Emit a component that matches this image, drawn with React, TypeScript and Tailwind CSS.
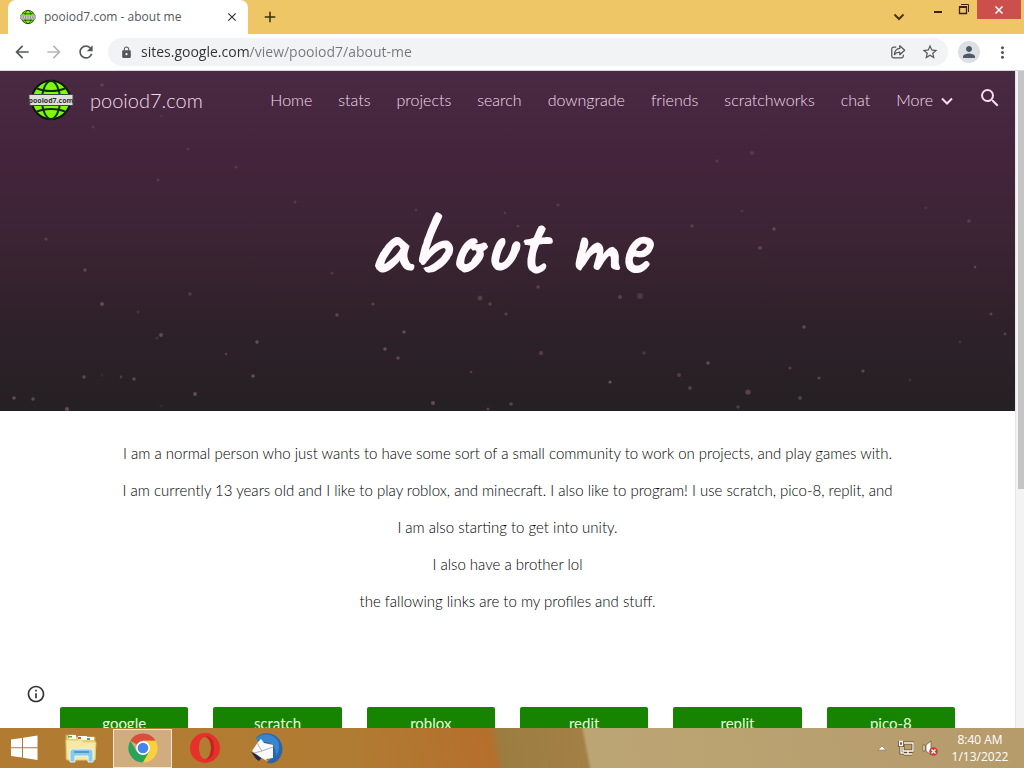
import React from "react";
import {
  MdArrowBack,
  MdArrowForward,
  MdRefresh,
  MdLock,
  MdStarBorder,
  MdMoreVert,
  MdPerson,
  MdSearch,
  MdInfoOutline,
  MdClose,
  MdAdd,
} from "react-icons/md";

const navItems = ["Home", "stats", "projects", "search", "downgrade", "friends", "scratchworks", "chat"];

const paragraphs = [
  "I am a normal person who just wants to have some sort of a small community to work on projects, and play games with.",
  "I am currently 13 years old and I like to play roblox, and minecraft. I also like to program! I use scratch, pico-8, replit, and",
  "I am also starting to get into unity.",
  "I also have a brother lol",
  "the fallowing links are to my profiles and stuff.",
];

const links = ["google", "scratch", "roblox", "redit", "replit", "pico-8"];

// x, y, radius, opacity
const stars: [number, number, number, number][] = [
  [102, 14, 1.6, 0.2], [138, 241, 1.5, 0.2], [161, 45, 1.3, 0.15], [157, 267, 1.5, 0.2],
  [102, 14, 2, 0.1], [102, 304, 1.8, 0.1], [102, 14, 1, 0.1], [161, 335, 1.6, 0.1],
  [84, 306, 1.7, 0.45], [121, 306, 1.4, 0.3], [134, 308, 1.7, 0.45], [14, 327, 1.8, 0.5],
  [102, 233, 2, 0.45], [161, 264, 2, 0.45], [67, 338, 2, 0.5], [190, 223, 1.7, 0.3],
  [33, 328, 1.7, 0.45], [257, 271, 1.8, 0.5], [226, 283, 1.3, 0.35], [253, 305, 1.8, 0.5],
  [195, 323, 1.9, 0.5], [337, 244, 1.8, 0.4], [373, 233, 1.6, 0.35], [404, 261, 1.8, 0.45],
  [385, 278, 1.8, 0.5], [398, 287, 1.7, 0.45], [433, 332, 2, 0.5], [471, 301, 1.3, 0.35],
  [480, 227, 2.5, 0.3], [490, 233, 1.7, 0.35], [506, 243, 1.6, 0.35], [488, 338, 1.6, 0.35],
  [511, 333, 1.8, 0.4], [538, 216, 1.8, 0.35], [620, 226, 2, 0.35], [640, 225, 3, 0.25],
  [541, 282, 2.3, 0.3], [644, 282, 1.8, 0.25], [610, 311, 1.6, 0.55], [679, 304, 2, 0.35],
  [690, 317, 1.9, 0.35], [708, 292, 1.8, 0.45], [748, 321, 2.6, 0.4], [738, 336, 1.8, 0.35],
  [800, 327, 2, 0.35], [790, 297, 1.6, 0.35], [819, 307, 1.6, 0.4], [863, 300, 1.6, 0.45],
  [804, 256, 1.8, 0.45], [991, 243, 1.5, 0.4], [1005, 263, 1.4, 0.35], [960, 271, 1.3, 0.25],
  [774, 158, 1.8, 0.4], [760, 177, 2, 0.35], [742, 140, 1.6, 0.2], [692, 155, 1.8, 0.3],
  [558, 134, 1.6, 0.25], [518, 155, 1.5, 0.3], [717, 90, 1.6, 0.25], [752, 82, 2, 0.25],
  [969, 150, 1.8, 0.3], [975, 196, 1.3, 0.4], [926, 137, 1.3, 0.2], [85, 199, 1.7, 0.4],
  [46, 168, 1.6, 0.3], [158, 109, 1.6, 0.25], [236, 96, 1.5, 0.25], [93, 56, 1.5, 0.2],
  [188, 78, 1.6, 0.2], [295, 131, 1.6, 0.25], [332, 202, 1.6, 0.25], [416, 139, 1.5, 0.2],
  [505, 142, 1.4, 0.25], [910, 309, 1.5, 0.2],
];

function Globe({ className, label = true }: { className?: string; label?: boolean }) {
  return (
    <svg viewBox="0 0 46 42" className={className} aria-hidden="true">
      <circle cx="23" cy="21" r="19.2" fill="#7dfb08" stroke="#111" strokeWidth="2" />
      <g fill="none" stroke="#152d08" strokeWidth="2">
        <ellipse cx="23" cy="21" rx="9" ry="19" />
        <path d="M8 9c8 4 22 4 30 0M8 33c8-4 22-4 30 0M4 21h38" />
      </g>
      <rect x="1" y="15.500" width="44" height="11" fill="#dfdfdc" stroke="#444" strokeWidth="1" />
      {label ? (
        <text x="23" y="23.500" textAnchor="middle" fontFamily="Open Sans, sans-serif" fontSize="7" fontWeight="700" fill="#333">
          pooiod7.com
        </text>
      ) : (
        <path d="M4 21h38" stroke="#777" strokeWidth="4" strokeDasharray="3 2" />
      )}
    </svg>
  );
}

function BrowserTabs() {
  return (
    <header className="flex h-[34px] shrink-0 bg-[#eec665] pl-2">
      <div className="flex w-60 items-center rounded-t-lg bg-white pl-3 pr-2">
        <Globe className="h-4 w-4 shrink-0" label={false} />
        <span className="ml-2 grow truncate text-xs text-[#55585c]">pooiod7.com - about me</span>
        <button aria-label="Close tab" className="flex h-4 w-4 items-center justify-center text-[#333]">
          <MdClose size={14} />
        </button>
      </div>
      <button aria-label="New tab" className="ml-3 flex w-5 items-center justify-center text-[#3b2d12]">
        <MdAdd size={18} />
      </button>
      <div className="grow" />
      <button aria-label="Search tabs" className="mr-4 flex w-5 items-center justify-center text-[#4a3510]">
        <svg viewBox="0 0 12 12" className="h-3 w-3" fill="none" stroke="currentColor" strokeWidth="2">
          <path d="M1.500 3.500 6 8l4.500-4.500" />
        </svg>
      </button>
      <button aria-label="Minimize" className="flex h-5 w-[26px] items-center justify-center text-[#40210c]">
        <svg viewBox="0 0 10 10" className="h-2.5 w-2.5"><path d="M1 6h8v2H1z" fill="currentColor" /></svg>
      </button>
      <button aria-label="Restore" className="flex h-[18px] w-[26px] items-center justify-center text-[#40210c]">
        <svg viewBox="0 0 12 12" className="h-3 w-3" fill="none" stroke="currentColor">
          <path d="M3 1.500h7.500V9" strokeWidth="1" />
          <path d="M1.500 4h7v6.500h-7z" strokeWidth="1.300" />
          <path d="M1 4h8" strokeWidth="2" />
        </svg>
      </button>
      <button aria-label="Close window" className="mr-[3px] flex h-[19px] w-11 items-center justify-center bg-[#cb4f4d] text-white">
        <svg viewBox="0 0 10 10" className="h-2.5 w-2.5" stroke="currentColor" strokeWidth="1.500"><path d="m1.500 1.500 7 7m0-7-7 7" /></svg>
      </button>
    </header>
  );
}

function Toolbar() {
  return (
    <div className="flex h-[37px] shrink-0 items-center border-b border-[#d9d5d8] bg-white pl-3 pr-3 text-[#54575b]">
      <button aria-label="Back" className="flex w-5 justify-center"><MdArrowBack size={20} /></button>
      <button aria-label="Forward" className="ml-3 flex w-5 justify-center text-[#b4b6b9]"><MdArrowForward size={20} /></button>
      <button aria-label="Reload" className="ml-3 flex w-5 justify-center"><MdRefresh size={20} /></button>
      <div className="ml-3 flex h-7 grow items-center rounded-full bg-[#f1f3f4] pl-3 pr-2">
        <MdLock size={13} className="shrink-0" />
        <input
          aria-label="Address"
          defaultValue="sites.google.com/view/pooiod7/about-me"
          className="ml-2 min-w-0 grow bg-[linear-gradient(90deg,#2f3134_108px,#74787d_108px)] bg-clip-text text-sm text-transparent outline-none"
        />
        <button aria-label="Share" className="flex w-5 justify-center">
          <svg viewBox="0 0 18 18" className="h-4 w-4" fill="none" stroke="currentColor" strokeWidth="1.400" strokeLinejoin="round">
            <path d="M7 3.500H4A2 2 0 0 0 2 5.500v8a2 2 0 0 0 2 2h9a2 2 0 0 0 2-2V12" />
            <path d="M11 2v3C7.500 5.300 5.300 7.800 5 12c1.500-2 3.300-2.900 6-2.900V12l5.500-5z" />
          </svg>
        </button>
        <button aria-label="Bookmark this page" className="ml-3 flex w-5 justify-center"><MdStarBorder size={18} /></button>
      </div>
      <button aria-label="Profile" className="ml-2.5 flex h-[22px] w-[22px] items-center justify-center rounded-full bg-[#dce0e5] text-[#4d5968]">
        <MdPerson size={18} />
      </button>
      <button aria-label="Menu" className="ml-3 flex w-5 justify-center"><MdMoreVert size={19} /></button>
    </div>
  );
}

function Hero() {
  return (
    <section className="relative flex h-[340px] flex-col overflow-hidden bg-[linear-gradient(#4a2942,#44243c_25%,#3b2434_50%,#30212a_72%,#242023)] text-[#f2dced]">
      <svg viewBox="0 0 1015 340" preserveAspectRatio="xMidYMid slice" className="absolute inset-0 h-full w-full" aria-hidden="true">
        {stars.map(([x, y, r, o], i) => (
          <circle key={i} cx={x} cy={y} r={r} fill="#a8758c" opacity={o} />
        ))}
      </svg>
      <div className="relative flex h-[58px] shrink-0 items-center pl-7 pr-[13px] font-light">
        <a href="#home" className="flex items-center text-xl">
          <Globe className="mr-4 h-[42px] w-[46px]" />
          pooiod7.com
        </a>
        <nav className="ml-auto flex items-center gap-[26px] text-base">
          {navItems.map((n) => (
            <a key={n} href={`#${n}`}>{n}</a>
          ))}
          <button className="flex items-center gap-2">
            More
            <svg viewBox="0 0 12 12" className="mt-0.5 h-3 w-3" fill="none" stroke="currentColor" strokeWidth="2">
              <path d="m1 3.500 5 5 5-5" />
            </svg>
          </button>
        </nav>
        <button aria-label="Search site" className="ml-[25px] flex w-6 justify-center pb-1"><MdSearch size={24} /></button>
      </div>
      <h1 className="relative pt-[75px] text-center font-[Caveat,Lato,cursive] text-[90px] font-bold leading-[80px] text-[#fff8fc]">about me</h1>
    </section>
  );
}

function Page() {
  return (
    <main className="relative flex min-h-0 grow overflow-hidden bg-white font-[Lato,sans-serif]">
      <div className="min-w-0 grow">
        <Hero />
        <section className="px-12 pt-6 text-center text-[15px] font-light leading-[37px] text-black">
          {paragraphs.map((p) => (
            <p key={p}>{p}</p>
          ))}
        </section>
        <div className="mt-[87px] grid grid-cols-6 gap-[25px] px-[60px]">
          {links.map((l) => (
            <a key={l} href={`#${l}`} className="flex h-8 items-center justify-center rounded-xs bg-[#168400] text-[15px] text-[#eaffdf]">
              {l}
            </a>
          ))}
        </div>
      </div>
      <div className="flex w-[9px] shrink-0 border-l border-[#e6e6e6] bg-[#f3f3f3] pl-0.5">
        <div className="h-[418px] w-full bg-[#c6c5c6]" />
      </div>
      <button aria-label="Site information" className="absolute bottom-6 left-[26px] text-[#333]"><MdInfoOutline size={20} /></button>
    </main>
  );
}

function Taskbar() {
  return (
    <footer className="flex h-10 shrink-0 items-center bg-[linear-gradient(79deg,#b17b32,#b27c32_20%,#b07b32_35%,#b56f2c_48%,#9c7d40_49%,#a38046_57%,#bca574_57.4%,#b69b6b)] text-white">
      <button aria-label="Start" className="flex w-12 justify-center">
        <svg viewBox="0 0 28 28" className="h-7 w-7" fill="#fff">
          <path d="M1 5.500 12 4v9.300H1zM13 3.800 27.500 1.500v11.800H13zM1 14.300h11v9.200L1 22zM13 14.300h14.500V26L13 23.700z" />
        </svg>
      </button>
      <button aria-label="File Explorer" className="ml-1 flex w-[58px] justify-center">
        <svg viewBox="0 0 34 32" className="h-8 w-[34px]">
          <path d="M2 3h9l2 2h18v22H2z" fill="#e9cf78" stroke="#c8a951" />
          <path d="M5 3h7v4H5zM14 4h9v4h-9zM23 5h7v3h-7z" fill="#fff" />
          <path d="M4 4h4v1.500H4z" fill="#5aa33b" /><path d="M14 5h3v2h-3z" fill="#d65a34" /><path d="M23 6h3v2h-3z" fill="#4e94c8" />
          <path d="M2 8h15l3 2h12l-1 18H3z" fill="#f7e9a5" stroke="#e3cc78" />
          <path d="M6 30V20q0-3 3-3h17q3 0 3 3v10h-5v-6H11v6z" fill="#8acbe9" stroke="#dff5ff" />
          <path d="M10 20h15" stroke="#4b9fce" strokeWidth="2" />
        </svg>
      </button>
      <button aria-label="Google Chrome" className="ml-[3px] flex h-[39px] w-[59px] items-center justify-center border border-[#fae8ce] bg-[#cfad7e]">
        <svg viewBox="0 0 30 30" className="h-[30px] w-[30px]">
          <path d="M15 15 2.400 7.700A14.500 14.500 0 0 1 27.600 7.700L15 7.700z" fill="#d94f3d" />
          <path d="M2.400 7.700A14.500 14.500 0 0 0 15 29.500l6.300-10.900L15 15 8.700 18.600z" fill="#29a35a" />
          <path d="M27.600 7.700A14.500 14.500 0 0 1 15 29.500l6.300-10.900L15 7.700z" fill="#fbcf3d" />
          <circle cx="15" cy="15" r="6.900" fill="#fff" /><circle cx="15" cy="15" r="5.300" fill="#4486ee" />
        </svg>
      </button>
      <button aria-label="Opera" className="ml-0.5 flex w-[62px] justify-center">
        <svg viewBox="0 0 30 30" className="h-[30px] w-[30px]">
          <path fillRule="evenodd" d="M15 0a15 15 0 1 0 0 30 15 15 0 0 0 0-30zm0 4c3.600 0 6 5 6 11s-2.400 11-6 11-6-5-6-11 2.400-11 6-11z" fill="#e8302b" />
          <path d="M15 4c5-2 9 3 9 11s-4 13-9 11c3.600 0 6-5 6-11S18.600 4 15 4z" fill="#c02422" />
        </svg>
      </button>
      <button aria-label="Thunderbird" className="flex w-[62px] justify-center">
        <svg viewBox="0 0 32 32" className="h-8 w-8">
          <path d="M5 6C10 0 20 0 26 5c7 6 7 17 1 23-3 3-7 4-11 3l6-8V12L8 11z" fill="#2467b0" />
          <path d="M5 6c8-6 18-4 22 3 2 5 1 11-2 15 0-8-3-13-10-14-4 0-8 0-10-4z" fill="#3a86cc" />
          <path d="M0 20l3 4c1 2 3 4 5 5l3-4z" fill="#20284f" />
          <path d="m7 10 3-3 3 4 9 2v13l-7 1 1 2-7-4-8-6z" fill="#f8f9fa" />
          <path d="m6 11 5 8 11-4M11 19l-8 2" fill="none" stroke="#a9b2bd" />
        </svg>
      </button>
      <div className="grow" />
      <button aria-label="Show hidden icons" className="flex w-5 justify-center">
        <svg viewBox="0 0 8 6" className="h-1.5 w-2"><path d="m0 5 4-4 4 4z" fill="#fff" stroke="#795f3b" strokeWidth=".5" /></svg>
      </button>
      <button aria-label="Network" className="ml-1 flex w-5 justify-center">
        <svg viewBox="0 0 16 16" className="h-4 w-4" fill="none">
          <path d="M5 3h10v8H5zM10 11v3M6 14h8M3 7v6h4" stroke="#6b4c2a" strokeWidth="3" />
          <path d="M1 2h4v4H1z" fill="#6b4c2a" stroke="#6b4c2a" strokeWidth="2" />
          <path d="M6 3h9v8H5V7M10 11v3M6 14h8M3 7v6h3M1.500 1.500h3v4h-3z" stroke="#fff" strokeWidth="1.300" />
        </svg>
      </button>
      <button aria-label="Volume muted" className="ml-1 flex w-5 justify-center">
        <svg viewBox="0 0 16 16" className="h-4 w-4">
          <path d="M1 5h2v6H1zM4 5l5-4v14l-5-4z" fill="#fff" stroke="#6b4c2a" strokeWidth=".7" />
          <circle cx="11.500" cy="11.500" r="4.300" fill="#cc3b34" />
          <path d="m9.500 9.500 4 4m0-4-4 4" stroke="#fff" strokeWidth="1.300" />
        </svg>
      </button>
      <div className="ml-2 mr-3 w-[64px] text-center text-xs leading-[17px]">
        <p className="whitespace-nowrap">8:40 AM</p>
        <p className="whitespace-nowrap">1/13/2022</p>
      </div>
    </footer>
  );
}

export default function App() {
  return (
    <div className="flex h-screen flex-col overflow-hidden bg-white font-['Open_Sans',sans-serif]">
      <BrowserTabs />
      <Toolbar />
      <Page />
      <Taskbar />
    </div>
  );
}
